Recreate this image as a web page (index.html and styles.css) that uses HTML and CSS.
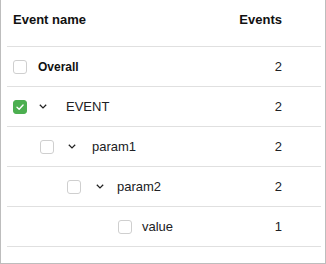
FILE: index.html
```html
<!DOCTYPE html>
<html>
<head>
<meta charset="utf-8">
<link rel="stylesheet" href="styles.css">
</head>
<body>
<div class="panel">
  <div class="table">
    <div class="head">
      <div class="hname">Event name</div>
      <div class="hcount">Events</div>
    </div>
    <div class="row">
      <div class="name lv0">
        <span class="cb"></span>
        <span class="label leaf bold">Overall</span>
      </div>
      <div class="count">2</div>
    </div>
    <div class="row">
      <div class="name lv0">
        <span class="cb checked"><svg width="14" height="14" viewBox="0 0 14 14"><path d="M3.5 7.2 L6 9.6 L10.6 4.6" fill="none" stroke="#fff" stroke-width="1.6" stroke-linecap="round" stroke-linejoin="round"/></svg></span>
        <span class="chev"><svg width="8" height="5" viewBox="0 0 8 5"><path d="M0.8 0.8 L4 3.9 L7.2 0.8" fill="none" stroke="#222" stroke-width="1.3"/></svg></span>
        <span class="label">EVENT</span>
      </div>
      <div class="count">2</div>
    </div>
    <div class="row">
      <div class="name lv1">
        <span class="cb"></span>
        <span class="chev"><svg width="8" height="5" viewBox="0 0 8 5"><path d="M0.8 0.8 L4 3.9 L7.2 0.8" fill="none" stroke="#222" stroke-width="1.3"/></svg></span>
        <span class="label">param1</span>
      </div>
      <div class="count">2</div>
    </div>
    <div class="row">
      <div class="name lv2">
        <span class="cb"></span>
        <span class="chev"><svg width="8" height="5" viewBox="0 0 8 5"><path d="M0.8 0.8 L4 3.9 L7.2 0.8" fill="none" stroke="#222" stroke-width="1.3"/></svg></span>
        <span class="label">param2</span>
      </div>
      <div class="count">2</div>
    </div>
    <div class="row">
      <div class="name lv3">
        <span class="cb"></span>
        <span class="label leaf">value</span>
      </div>
      <div class="count">1</div>
    </div>
  </div>
</div>
</body>
</html>
```
FILE: styles.css
```css
html, body {
  margin: 0;
  padding: 0;
  background: #fff;
}
body {
  font-family: "Liberation Sans", Arial, sans-serif;
  color: #202124;
}
.panel {
  box-sizing: border-box;
  width: 326px;
  height: 264px;
  border: 1px solid #bdbdbd;
  border-top: none;
  padding: 0 4px 0 6px;
}
.table {
  display: flex;
  flex-direction: column;
}
.head {
  box-sizing: border-box;
  height: 47px;
  border-bottom: 1px solid #e0e0e0;
  display: flex;
  align-items: flex-start;
  padding-top: 12px;
  font-size: 13px;
  font-weight: bold;
  color: #111;
  line-height: 16px;
}
.hname {
  flex: 1;
  padding-left: 6px;
}
.hcount {
  padding-right: 39px;
}
.row {
  box-sizing: border-box;
  height: 40px;
  border-bottom: 1px solid #e0e0e0;
  display: flex;
  align-items: center;
  font-size: 13px;
  line-height: 16px;
}
.name {
  flex: 1;
  display: flex;
  align-items: center;
}
.lv0 { padding-left: 6px; }
.lv1 { padding-left: 33px; }
.lv2 { padding-left: 60px; }
.lv3 { padding-left: 111px; }
.count {
  padding-right: 39px;
  color: #202124;
}
.cb {
  box-sizing: border-box;
  width: 14px;
  height: 14px;
  border: 1px solid #cfcfcf;
  border-radius: 3px;
  background: #fff;
  display: flex;
  align-items: center;
  justify-content: center;
  flex: none;
}
.cb.checked {
  background: #4caf50;
  border-color: #4caf50;
}
.cb.checked svg {
  display: block;
}
.chev {
  width: 8px;
  height: 5px;
  margin-left: 13px;
  display: flex;
  flex: none;
}
.chev svg { display: block; }
.lv0 .chev { margin-left: 12px; }
.lv1 .chev { margin-left: 14px; }
.lv2 .chev { margin-left: 15px; }
.label { margin-left: 19px; }
.lv1 .label { margin-left: 16px; }
.lv2 .label { margin-left: 13px; }
.label.leaf { margin-left: 11px; }
.lv3 .label.leaf { margin-left: 10px; }
.bold {
  font-weight: bold;
  font-size: 12px;
  color: #111;
}
```
